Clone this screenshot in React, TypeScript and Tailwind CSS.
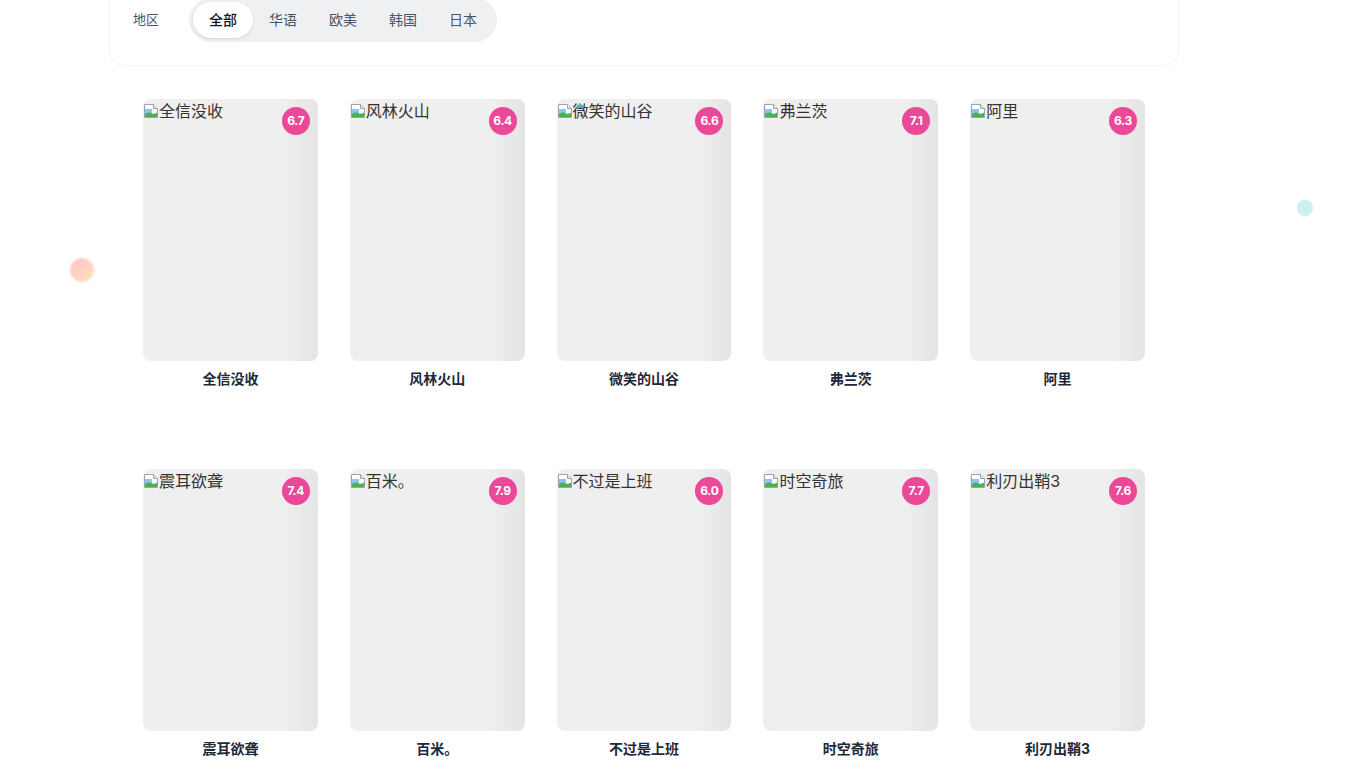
import { useState } from "react";

const regions = ["全部", "华语", "欧美", "韩国", "日本"];

const movies = [
  { title: "全信没收", rating: "6.7" },
  { title: "风林火山", rating: "6.4" },
  { title: "微笑的山谷", rating: "6.6" },
  { title: "弗兰茨", rating: "7.1" },
  { title: "阿里", rating: "6.3" },
  { title: "震耳欲聋", rating: "7.4" },
  { title: "百米。", rating: "7.9" },
  { title: "不过是上班", rating: "6.0" },
  { title: "时空奇旅", rating: "7.7" },
  { title: "利刃出鞘3", rating: "7.6" },
];

function BrokenImage() {
  return (
    <svg width="16" height="16" viewBox="0 0 16 16" aria-hidden="true" className="shrink-0">
      <path d="M1.5 1.5h9l4 4v9h-13z" fill="#fff" stroke="#9ca3af" strokeWidth="1" />
      <path d="M10.5 1.5v4h4" fill="#e5e7eb" stroke="#9ca3af" strokeWidth="1" />
      <path d="M2 6h7v5H2z" fill="#8ec5f0" />
      <path d="M2 14V11.5c2-2 4-2.5 6.5-1.2 1.8 1 3.5.5 5.5-.8V14z" fill="#4caf50" />
    </svg>
  );
}

export default function App() {
  const [active, setActive] = useState("全部");

  return (
    <div className="relative min-h-[773px] bg-white overflow-hidden font-['Inter','Noto_Sans_CJK_SC',sans-serif] text-gray-900">
      {/* floating dots */}
      <div className="absolute left-[70px] top-[258px] w-6 h-6 rounded-full bg-gradient-to-br from-[#ffc2cc] to-[#ffe0b8] blur-[1px]" />
      <div className="absolute left-[1297px] top-[200px] w-4 h-4 rounded-full bg-[#cfeeee]" />
      <div className="absolute left-[1102px] top-[22px] w-6 h-6 rounded-full bg-[#eeeafd] blur-[3px] opacity-70" />

      {/* filter panel */}
      <div className="relative ml-[109px] w-[1070px] -mt-[27px] px-[23px] pt-6 pb-[23px] bg-white border border-gray-100 rounded-2xl shadow-[0_1px_3px_rgba(0,0,0,0.02)]">
        <div className="flex items-center">
          <span className="w-14 text-[13px] text-gray-600">地区</span>
          <div className="flex p-1 bg-[#eff0f2] rounded-full">
            {regions.map((r) => (
              <button
                key={r}
                onClick={() => setActive(r)}
                className={`px-4 py-2 text-sm leading-5 rounded-full ${
                  active === r
                    ? "bg-white text-gray-900 font-medium shadow-sm"
                    : "text-gray-600"
                }`}
              >
                {r}
              </button>
            ))}
          </div>
        </div>
      </div>

      {/* movie grid */}
      <div className="ml-[143px] w-[1002px] mt-[33px] grid grid-cols-5 gap-x-8 gap-y-20">
        {movies.map((m) => (
          <div key={m.title}>
            <div className="relative h-[262px] rounded-lg overflow-hidden bg-gradient-to-r from-[#efefef] from-80% to-[#e4e4e4]">
              <div className="flex items-center text-[16px] leading-6 text-[#333]">
                <BrokenImage />
                <span>{m.title}</span>
              </div>
              <div className="absolute top-2 right-2 w-7 h-7 rounded-full bg-[#ec4899] text-white text-[12px] font-bold flex items-center justify-center tracking-tight">
                {m.rating}
              </div>
            </div>
            <p className="mt-2 text-center text-sm leading-5 font-bold text-gray-800">{m.title}</p>
          </div>
        ))}
      </div>
    </div>
  );
}
